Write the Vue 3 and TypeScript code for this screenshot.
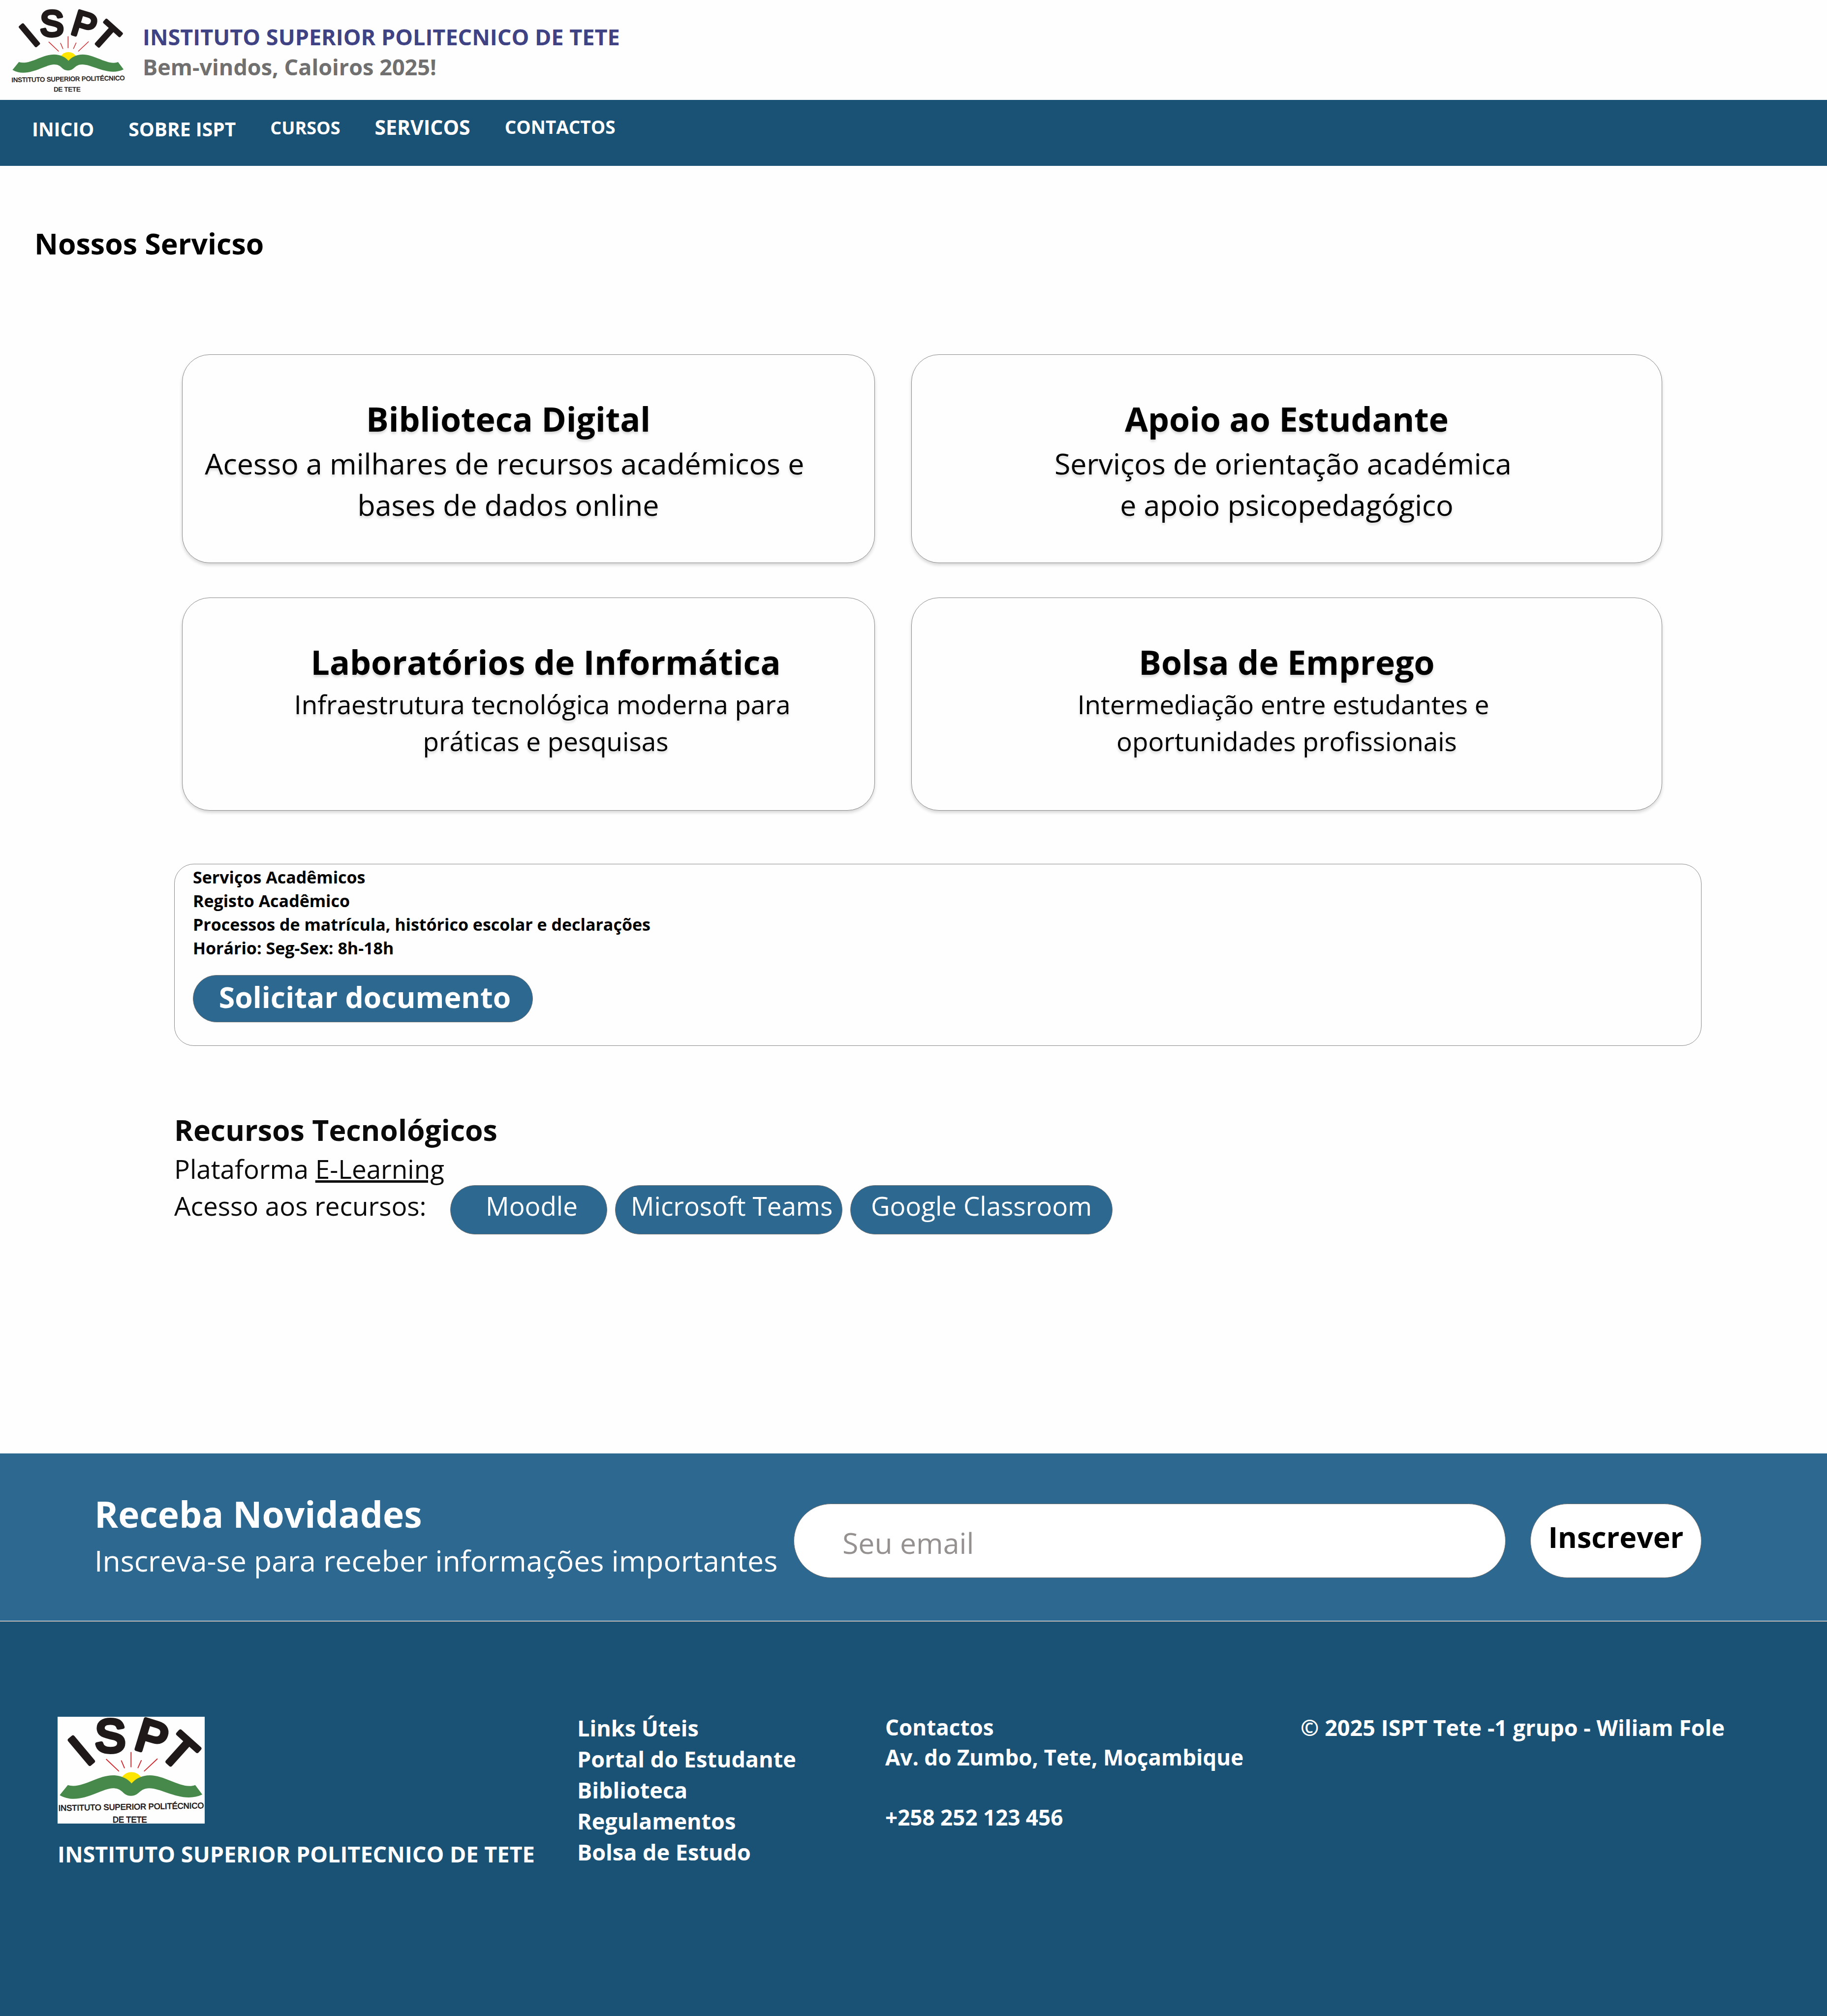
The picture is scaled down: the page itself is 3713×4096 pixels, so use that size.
<script setup lang="ts">
import { defineComponent, h, ref } from 'vue'

interface NavItem {
  label: string
  size: 'large' | 'small' | 'active' | 'regular'
}

interface Service {
  title: string
  lines: [string, string]
  compact: boolean
  shift: 'none' | 'left' | 'right'
}

const institution = 'INSTITUTO SUPERIOR POLITECNICO DE TETE'

const navItems: NavItem[] = [
  { label: 'INICIO', size: 'large' },
  { label: 'SOBRE ISPT', size: 'large' },
  { label: 'CURSOS', size: 'small' },
  { label: 'SERVICOS', size: 'active' },
  { label: 'CONTACTOS', size: 'regular' },
]

const services: Service[] = [
  {
    title: 'Biblioteca Digital',
    lines: ['Acesso a milhares de recursos académicos e', 'bases de dados online'],
    compact: false,
    shift: 'left',
  },
  {
    title: 'Apoio ao Estudante',
    lines: ['Serviços de orientação académica', 'e apoio psicopedagógico'],
    compact: false,
    shift: 'none',
  },
  {
    title: 'Laboratórios de Informática',
    lines: ['Infraestrutura tecnológica moderna para', 'práticas e pesquisas'],
    compact: true,
    shift: 'right',
  },
  {
    title: 'Bolsa de Emprego',
    lines: ['Intermediação entre estudantes e', 'oportunidades profissionais'],
    compact: true,
    shift: 'none',
  },
]

const platforms = [
  { label: 'Moodle', kind: 'wide' },
  { label: 'Microsoft Teams', kind: 'tight' },
  { label: 'Google Classroom', kind: 'even' },
]

const usefulLinks = ['Portal do Estudante', 'Biblioteca', 'Regulamentos', 'Bolsa de Estudo']

const email = ref('')

const letter = {
  'font-family': '"Liberation Sans", Arial, sans-serif',
  'font-weight': 400,
  'font-size': 345,
  fill: '#1f1a19',
  stroke: '#1f1a19',
  'stroke-width': 30,
  'stroke-linejoin': 'round',
}

const caption = {
  'font-family': '"Liberation Sans", Arial, sans-serif',
  'font-weight': 400,
  'text-anchor': 'middle',
  fill: '#1f1a19',
  stroke: '#1f1a19',
  'stroke-width': 3,
}

const IsptLogo = defineComponent({
  render() {
    return h('svg', { viewBox: '0 0 1116 810', overflow: 'visible', role: 'img', 'aria-label': 'ISPT' }, [
      h('rect', { width: 1116, height: 810, fill: '#fefefe' }),
      h('text', { ...letter, 'text-anchor': 'middle', transform: 'translate(257 348) rotate(-40)' }, 'I'),
      h('text', { ...letter, 'text-anchor': 'middle', x: 400, y: 264 }, 'S'),
      h('text', { ...letter, x: -45, transform: 'translate(615 250) rotate(17)' }, 'P'),
      h('text', { ...letter, 'text-anchor': 'middle', transform: 'translate(845 352) rotate(42)' }, 'T'),
      h('path', {
        d: 'M370 323 464 412M484 334 507 388M557 270V380M635 332 610 387M756 320 658 412',
        stroke: '#d0262b',
        'stroke-width': 7,
        'stroke-linecap': 'round',
        fill: 'none',
      }),
      h('path', { d: 'M480 470Q510 420 560 420Q610 420 642 470L561 530Z', fill: '#ffe600' }),
      h('path', {
        d: 'M16 594 78 518C180 550 300 444 420 444C480 444 535 470 561 506C590 470 640 444 700 444C820 444 950 555 1044 518L1098 590C950 660 800 542 695 542C620 542 620 600 558 600C490 600 500 542 420 542C330 542 160 680 16 594Z',
        fill: '#47884b',
      }),
      h('text', { ...caption, 'font-size': 62, transform: 'translate(558 704) rotate(-1)' }, 'INSTITUTO SUPERIOR POLITÉCNICO'),
      h('text', { ...caption, 'font-size': 62, x: 548, y: 804 }, 'DE TETE'),
    ])
  },
})
</script>

<template>
  <div class="page">
    <header class="brand">
      <IsptLogo class="brand-logo" />
      <div class="brand-text">
        <div class="brand-name">{{ institution }}</div>
        <div class="brand-welcome">Bem-vindos, Caloiros 2025!</div>
      </div>
    </header>

    <nav class="nav">
      <a v-for="item in navItems" :key="item.label" href="#" class="nav-link" :class="item.size">{{ item.label }}</a>
    </nav>

    <main class="main">
      <h1 class="page-title">Nossos Servicso</h1>

      <div class="content">
        <section class="cards">
          <article
            v-for="service in services"
            :key="service.title"
            class="card"
            :class="[`shift-${service.shift}`, { compact: service.compact }]"
          >
            <h2>{{ service.title }}</h2>
            <p>{{ service.lines[0] }}&nbsp;<br />{{ service.lines[1] }}</p>
          </article>
        </section>

        <section class="panel">
          <p>Serviços Acadêmicos</p>
          <p>Registo Acadêmico</p>
          <p>Processos de matrícula, histórico escolar e declarações</p>
          <p>Horário: Seg-Sex: 8h-18h</p>
          <button type="button" class="request">Solicitar documento</button>
        </section>

        <section class="resources">
          <h2>Recursos Tecnológicos</h2>
          <p>Plataforma <a href="#">E-Learning</a></p>
          <div class="access">
            <span class="access-label">Acesso aos recursos:</span>
            <div class="pills">
              <button v-for="p in platforms" :key="p.label" type="button" class="pill" :class="p.kind">{{ p.label }}</button>
            </div>
          </div>
        </section>
      </div>
    </main>

    <section class="newsletter">
      <div class="newsletter-text">
        <h2>Receba Novidades</h2>
        <p>Inscreva-se para receber informações importantes</p>
      </div>
      <form class="newsletter-form" @submit.prevent>
        <input v-model="email" type="email" placeholder="Seu email" aria-label="Seu email" />
        <button type="submit">Inscrever</button>
      </form>
    </section>

    <footer class="footer">
      <div class="footer-brand">
        <IsptLogo class="footer-logo" />
        <div>{{ institution }}</div>
      </div>
      <div class="footer-links">
        <div>Links Úteis</div>
        <a v-for="link in usefulLinks" :key="link" href="#">{{ link }}</a>
      </div>
      <address class="footer-contact">
        <div>Contactos</div>
        <div>Av. do Zumbo, Tete, Moçambique</div>
        <div class="phone">+258 252 123 456</div>
      </address>
      <div class="footer-copy">© 2025 ISPT Tete -1 grupo - Wiliam Fole</div>
    </footer>
  </div>
</template>

<style>
body {
  margin: 0;
}
</style>

<style scoped>
.page {
  display: flex;
  flex-direction: column;
  min-height: 100vh;
  background: #fefefe;
  color: #000;
  font-family: 'Open Sans', 'Noto Sans', sans-serif;
}

h1,
h2,
p {
  margin: 0;
}

a {
  color: inherit;
  text-decoration: none;
}

button,
input {
  box-sizing: border-box;
  margin: 0;
  font-family: inherit;
}

.brand {
  display: flex;
  gap: 35px;
  padding: 18px 22px 16px;
  font-size: 45px;
  font-weight: 700;
  line-height: 61px;
  white-space: nowrap;
}

.brand-logo {
  display: block;
  width: 233px;
  height: 169px;
}

.brand-text {
  padding-top: 26px;
}

.brand-name {
  color: #3f4384;
}

.brand-welcome {
  color: #707070;
}

.nav {
  display: flex;
  align-items: flex-start;
  gap: 70px;
  box-sizing: border-box;
  min-height: 134px;
  padding: 31px 65px 0;
  background: #1a5276;
  color: #fff;
  font-weight: 700;
}

.nav-link {
  line-height: 48px;
  white-space: nowrap;
}

.large {
  font-size: 39px;
  line-height: 56px;
}

.small {
  font-size: 36px;
  line-height: 52px;
}

.active {
  font-size: 41px;
}

.regular {
  font-size: 37px;
}

.page-title {
  padding: 115px 70px 0;
  font-size: 59px;
  line-height: 84px;
}

.content {
  padding: 184px 255px 445px 354px;
}

.cards {
  display: grid;
  grid-template-columns: 1408fr 1526fr;
  grid-template-rows: minmax(424px, auto) minmax(433px, auto);
  gap: 70px 74px;
  margin: 0 80px 0 16px;
}

.card {
  padding-top: 82px;
  border: 1px solid #8a8a8a;
  border-radius: 56px;
  background: #fefefe;
  box-shadow: 0 4px 6px rgba(0, 0, 0, 0.16);
  text-align: center;
  text-shadow: 0 4px 5px rgba(0, 0, 0, 0.16);
}

.card h2 {
  font-size: 68px;
  line-height: 96px;
}

.card p {
  font-size: 59px;
  line-height: 84px;
}

.card.compact p {
  font-size: 53px;
  line-height: 75px;
}

.shift-left {
  padding-right: 82px;
}

.shift-right {
  padding-left: 70px;
}

.panel {
  margin-top: 108px;
  padding: 2px 37px 47px;
  border: 1px solid #8a8a8a;
  border-radius: 40px;
  font-size: 34px;
  font-weight: 700;
  line-height: 48px;
}

.request {
  display: block;
  width: 691px;
  margin-top: 31px;
  padding: 1px 0 9px 8px;
  border: 1px solid #707070;
  border-radius: 48px;
  background: #2c6890;
  color: #fff;
  font-size: 59px;
  font-weight: 700;
  line-height: 84px;
}

.resources {
  margin-top: 128px;
  color: #0a0a0a;
  font-size: 53px;
  line-height: 75px;
}

.resources h2 {
  font-size: 59px;
  line-height: 84px;
}

.resources a {
  text-decoration: underline;
}

.access {
  display: flex;
  align-items: flex-start;
}

.access-label {
  width: 561px;
}

.pills {
  display: flex;
  gap: 16px;
  margin-top: -4px;
}

.pill {
  padding: 3px 0 20px;
  border: 1px solid #707070;
  border-radius: 50px;
  background: #2c6890;
  color: #fff;
  font-size: 53px;
  line-height: 75px;
  white-space: nowrap;
}

.pill.wide {
  width: 319px;
  padding-left: 12px;
}

.pill.tight {
  width: 462px;
  padding-left: 12px;
}

.pill.even {
  width: 533px;
}

.newsletter {
  display: flex;
  align-items: flex-start;
  padding: 71px 255px 81px 192px;
  border-bottom: 1px solid #fff;
  background: #2c6890;
  color: #fff;
}

.newsletter-text {
  flex: 0 0 1421px;
  white-space: nowrap;
}

.newsletter-text h2 {
  font-size: 73px;
  line-height: 104px;
}

.newsletter-text p {
  font-size: 59px;
  line-height: 84px;
}

.newsletter-form {
  display: flex;
  flex: 1;
  gap: 50px;
  padding-top: 31px;
}

.newsletter-form input,
.newsletter-form button {
  height: 151px;
  border: 1px solid #707070;
  border-radius: 76px;
  background: #fff;
  color: #000;
  font-size: 59px;
}

.newsletter-form input {
  flex: 1;
  min-width: 0;
  padding: 6px 98px 0;
}

.newsletter-form input::placeholder {
  color: #959190;
  opacity: 1;
}

.newsletter-form button {
  width: 348px;
  padding: 0 0 18px;
  font-weight: 700;
}

.footer {
  display: grid;
  flex: 1;
  grid-template-columns: 1056fr 626fr 844fr 1070fr;
  align-content: start;
  padding: 184px 0 80px 117px;
  border-top: 1px solid #707070;
  background: #1a5276;
  color: #fff;
  font-size: 45px;
  font-weight: 700;
  line-height: 61px;
  white-space: nowrap;
}

.footer-logo {
  display: block;
  width: 299px;
  height: 217px;
  margin: 9px 0 31px;
}

.footer-links {
  display: flex;
  flex-direction: column;
  line-height: 63px;
}

.footer-contact {
  font-size: 44px;
  font-style: normal;
}

.phone {
  margin-top: 61px;
}
</style>
